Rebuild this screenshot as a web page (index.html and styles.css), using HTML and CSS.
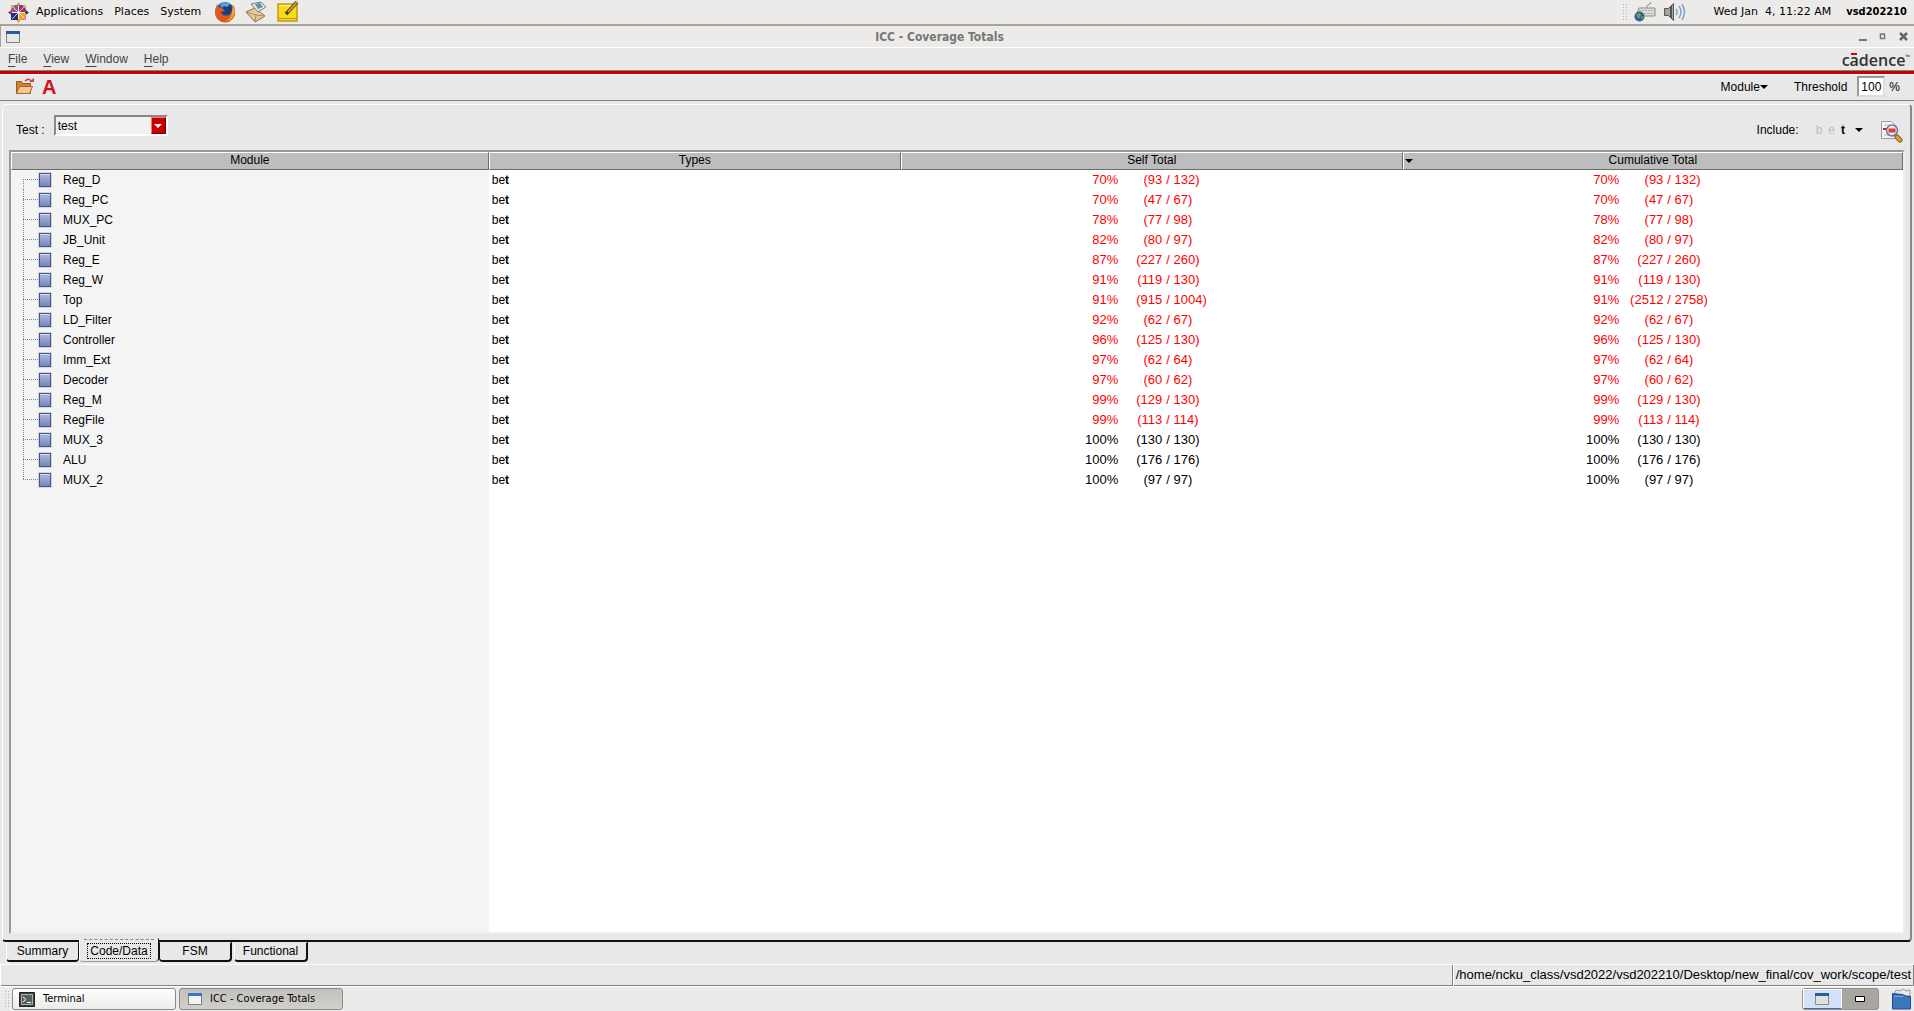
FILE: index.html
```html
<!DOCTYPE html>
<html lang="en">
<head>
<meta charset="utf-8">
<title>ICC - Coverage Totals</title>
<link rel="stylesheet" href="styles.css">
</head>
<body>
<header class="panel">
  <svg class="distro" viewBox="0 0 21 21" aria-hidden="true">
    <path fill="#9ac63c" d="M10.500 0l3 4h-6z"/><path fill="#e2a52c" d="M10.500 21l3-4h-6z"/>
    <path fill="#a0307e" d="M0 10.500l4-3v6z"/><path fill="#252f77" d="M21 10.500l-4-3v6z"/>
    <path fill="#a4518f" d="M3 3h7v7H3z"/><path fill="#a0307e" d="M11 3h7v7h-7z"/><path fill="#252f77" d="M3 11h7v7H3z"/><path fill="#efa724" d="M11 11h7v7h-7z"/>
    <path fill="#9ac63c" d="M3 3h4L3 7zM18 3v4l-4-4z"/><path fill="#e26aa5" d="M18 18v-4l-4 4z"/>
    <path stroke="#fff" stroke-width=".7" d="M4 4l13 13M17 4L4 17"/>
  </svg>
  <nav class="panel-menu"><a href="#">Applications</a><a href="#">Places</a><a href="#">System</a></nav>
  <div class="launchers">
    <a href="#" aria-label="Firefox"><svg width="22" height="22" viewBox="0 0 22 22"><circle cx="11" cy="11" r="10" fill="#2c64ac"/><circle cx="12" cy="8" r="6" fill="#1c3f7c"/><path fill="#4fa7dc" d="M6 3q6-3 10 0l-3 3-3-1-2 2z"/><path fill="#e2571b" d="M3 3L1 10q0 11 10 11.500Q21 21 21 10q0-4-2-6 0 4-1 6-1 5-6 5-5-1-5-4l4-1-3-3-4-1z"/><path fill="#f7a823" d="M19 4q3 5 1 10-3 6-8 6 6-3 6-10z"/></svg></a>
    <a href="#" aria-label="Mail"><svg width="24" height="22" viewBox="0 0 24 22"><path fill="#e9c793" stroke="#8b7149" d="M2 11l9-4 10 8-10 6z"/><path fill="#dfe6dd" stroke="#777f78" d="M7 3l10-2 5 5-8 5z"/><path fill="#5d91ad" d="M11 3l5-1 3 4-5 2z"/><path fill="none" stroke="#a98c5c" d="M2 11l10 3 9 1M11 21l1-7"/></svg></a>
    <a href="#" aria-label="Notes"><svg width="24" height="22" viewBox="0 0 24 22"><path fill="#f4dc1e" stroke="#c49a08" stroke-width="1.500" d="M2 3h19v17H2z"/><path stroke="#c49a08" d="M2 17.500h19"/><path stroke="#fff29a" d="M3.500 4.500h16"/><path stroke="#4a3a14" stroke-width="3.500" d="M10 13L21 1"/><path stroke="#c99545" stroke-width="2" d="M12 11L21 1"/></svg></a>
  </div>
  <div class="tray">
    <span class="grip"></span>
    <svg width="22" height="20" viewBox="0 0 22 20"><path fill="none" stroke="#888" d="M14 6Q11 4 14 3t3-3"/><path fill="#deded9" stroke="#8a8b86" d="M5 6h16v8H2z"/><path stroke="#aaa" stroke-dasharray="2 1" d="M5 8.500h15M4 11.500h16"/><circle cx="5.500" cy="14.500" r="5" fill="#2c5ba5"/><path fill="#6ca53a" d="M2 12l4-1 1 3-3 3zM7 15l3-1-2 4z"/></svg>
    <svg width="23" height="20" viewBox="0 0 23 20"><path fill="#a4a5a1" stroke="#555753" d="M1.500 6.500h4l5-5v17l-5-5h-4z"/><path fill="#555" d="M7 4h2v12H7z"/><path fill="none" stroke="#83a6cf" stroke-width="1.500" d="M13 7q2 3 0 6M16 4q4 6 0 12M19 2q5 8 0 16"/></svg>
    <span class="clock">Wed Jan&nbsp; 4, 11:22 AM</span>
    <strong>vsd202210</strong>
  </div>
</header>

<main class="window">
  <div class="titlebar">
    <svg width="14" height="12" viewBox="0 0 14 12"><path fill="#e6e9e5" stroke="#7d8285" d="M.5.5h13v11H.5z"/><path fill="#2b5b9f" d="M0 0h14v3H0z"/></svg>
    <h1>ICC - Coverage Totals</h1>
    <div class="controls">
      <button aria-label="Minimize"><svg width="8" height="10"><path fill="#777" d="M0 7h8v2H0z"/></svg></button>
      <button aria-label="Maximize"><svg width="8" height="10"><path fill="none" stroke="#777" stroke-width="1.500" d="M1.500 2h4v4.500h-4z"/></svg></button>
      <button aria-label="Close"><svg width="9" height="10"><path stroke="#666" stroke-width="2.500" d="M1 1l7 7M8 1L1 8"/></svg></button>
    </div>
  </div>

  <div class="menubar">
    <nav><a href="#"><u>F</u>ile</a><a href="#"><u>V</u>iew</a><a href="#"><u>W</u>indow</a><a href="#"><u>H</u>elp</a></nav>
    <div class="brand">c<span class="macron">a</span>dence<sup>™</sup></div>
  </div>

  <div class="toolbar">
    <button class="tool" aria-label="Open"><svg width="20" height="18" viewBox="0 0 20 18"><path fill="#cf823b" stroke="#9d5821" d="M1.500 15.500v-12h5l1 2h8v10z"/><path fill="#fac98a" stroke="#a9652c" d="M1.500 15.500l3-7h13l-3 7z"/><path fill="none" stroke="#c8474b" stroke-width="1.500" d="M10 3q4-4 7 1"/><path fill="#c8474b" d="M14 4h5V0z"/></svg></button>
    <button class="tool letter">A</button>
    <div class="tool-right">
      <button class="drop">Module<i class="caret"></i></button>
      <label for="threshold">Threshold</label>
      <input id="threshold" type="text" value="100">
      <span>%</span>
    </div>
  </div>

  <section class="sheet">
    <div class="filters">
      <label for="test">Test :</label>
      <div class="combo"><select id="test"><option>test</option></select><span class="combo-arrow"><i class="caret"></i></span></div>
      <div class="include"><span>Include:</span><button class="types"><span class="off">b</span><span class="off">e</span><b>t</b><i class="caret"></i></button>
        <button class="tool" aria-label="Inspect"><svg width="23" height="23" viewBox="0 0 23 23"><path fill="#f6f6f6" stroke="#9a9a9a" d="M1.500 1.500h10l4 4v13h-14z"/><path stroke="#bbb" d="M4 5h6M4 15h8"/><path stroke="#c22" stroke-width="2" d="M3 9h4"/><path stroke="#8a5a18" stroke-width="5" stroke-linecap="round" d="M17 17l3 3"/><path stroke="#eaa030" stroke-width="3" stroke-linecap="round" d="M17 17l3 3"/><circle cx="12" cy="10.500" r="5.500" fill="#f4dede" stroke="#6079ac" stroke-width="1.500"/><path fill="#d84444" d="M8.500 8.500h7v4h-7z"/></svg></button>
      </div>
    </div>
    <div class="grid">
      <table>
        <colgroup><col class="c-mod"><col class="c-typ"><col class="c-self"><col class="c-cum"></colgroup>
        <thead><tr><th>Module</th><th>Types</th><th>Self Total</th><th><i class="caret sort"></i>Cumulative Total</th></tr></thead>
        <tbody>
          <tr class="low"><td><div class="node">Reg_D</div></td><td>be<b>t</b></td><td><div class="score"><span>70%</span><span>(93</span><span>/ 132)</span></div></td><td><div class="score"><span>70%</span><span>(93</span><span>/ 132)</span></div></td></tr>
          <tr class="low"><td><div class="node">Reg_PC</div></td><td>be<b>t</b></td><td><div class="score"><span>70%</span><span>(47</span><span>/ 67)</span></div></td><td><div class="score"><span>70%</span><span>(47</span><span>/ 67)</span></div></td></tr>
          <tr class="low"><td><div class="node">MUX_PC</div></td><td>be<b>t</b></td><td><div class="score"><span>78%</span><span>(77</span><span>/ 98)</span></div></td><td><div class="score"><span>78%</span><span>(77</span><span>/ 98)</span></div></td></tr>
          <tr class="low"><td><div class="node">JB_Unit</div></td><td>be<b>t</b></td><td><div class="score"><span>82%</span><span>(80</span><span>/ 97)</span></div></td><td><div class="score"><span>82%</span><span>(80</span><span>/ 97)</span></div></td></tr>
          <tr class="low"><td><div class="node">Reg_E</div></td><td>be<b>t</b></td><td><div class="score"><span>87%</span><span>(227</span><span>/ 260)</span></div></td><td><div class="score"><span>87%</span><span>(227</span><span>/ 260)</span></div></td></tr>
          <tr class="low"><td><div class="node">Reg_W</div></td><td>be<b>t</b></td><td><div class="score"><span>91%</span><span>(119</span><span>/ 130)</span></div></td><td><div class="score"><span>91%</span><span>(119</span><span>/ 130)</span></div></td></tr>
          <tr class="low"><td><div class="node">Top</div></td><td>be<b>t</b></td><td><div class="score"><span>91%</span><span>(915</span><span>/ 1004)</span></div></td><td><div class="score"><span>91%</span><span>(2512</span><span>/ 2758)</span></div></td></tr>
          <tr class="low"><td><div class="node">LD_Filter</div></td><td>be<b>t</b></td><td><div class="score"><span>92%</span><span>(62</span><span>/ 67)</span></div></td><td><div class="score"><span>92%</span><span>(62</span><span>/ 67)</span></div></td></tr>
          <tr class="low"><td><div class="node">Controller</div></td><td>be<b>t</b></td><td><div class="score"><span>96%</span><span>(125</span><span>/ 130)</span></div></td><td><div class="score"><span>96%</span><span>(125</span><span>/ 130)</span></div></td></tr>
          <tr class="low"><td><div class="node">Imm_Ext</div></td><td>be<b>t</b></td><td><div class="score"><span>97%</span><span>(62</span><span>/ 64)</span></div></td><td><div class="score"><span>97%</span><span>(62</span><span>/ 64)</span></div></td></tr>
          <tr class="low"><td><div class="node">Decoder</div></td><td>be<b>t</b></td><td><div class="score"><span>97%</span><span>(60</span><span>/ 62)</span></div></td><td><div class="score"><span>97%</span><span>(60</span><span>/ 62)</span></div></td></tr>
          <tr class="low"><td><div class="node">Reg_M</div></td><td>be<b>t</b></td><td><div class="score"><span>99%</span><span>(129</span><span>/ 130)</span></div></td><td><div class="score"><span>99%</span><span>(129</span><span>/ 130)</span></div></td></tr>
          <tr class="low"><td><div class="node">RegFile</div></td><td>be<b>t</b></td><td><div class="score"><span>99%</span><span>(113</span><span>/ 114)</span></div></td><td><div class="score"><span>99%</span><span>(113</span><span>/ 114)</span></div></td></tr>
          <tr><td><div class="node">MUX_3</div></td><td>be<b>t</b></td><td><div class="score"><span>100%</span><span>(130</span><span>/ 130)</span></div></td><td><div class="score"><span>100%</span><span>(130</span><span>/ 130)</span></div></td></tr>
          <tr><td><div class="node">ALU</div></td><td>be<b>t</b></td><td><div class="score"><span>100%</span><span>(176</span><span>/ 176)</span></div></td><td><div class="score"><span>100%</span><span>(176</span><span>/ 176)</span></div></td></tr>
          <tr><td><div class="node">MUX_2</div></td><td>be<b>t</b></td><td><div class="score"><span>100%</span><span>(97</span><span>/ 97)</span></div></td><td><div class="score"><span>100%</span><span>(97</span><span>/ 97)</span></div></td></tr>
        </tbody>
      </table>
    </div>
  </section>

  <div class="tabs">
    <button>Summary</button><button class="current"><span>Code/Data</span></button><button class="outlined">FSM</button><button class="last">Functional</button>
  </div>
  <div class="status"><span></span><span>/home/ncku_class/vsd2022/vsd202210/Desktop/new_final/cov_work/scope/test</span></div>
</main>

<footer class="taskbar">
  <span class="grip"></span>
  <button><svg width="16" height="15" viewBox="0 0 16 15"><path fill="#394345" stroke="#222" d="M.5.5h15v14H.5z"/><path fill="#55605f" stroke="#aab0ae" d="M2.500 2.500h11v10h-11z"/><path fill="none" stroke="#fff" d="M4 5l3 2.500L4 10M8 10.500h4"/></svg>Terminal</button>
  <button class="active"><svg width="14" height="12" viewBox="0 0 14 12"><path fill="#f4f5f3" stroke="#7d8285" d="M.5.5h13v11H.5z"/><path fill="#3f74c0" d="M0 0h14v3H0z"/></svg>ICC - Coverage Totals</button>
  <div class="pager">
    <button class="here" aria-label="Workspace 1"><svg width="14" height="12" viewBox="0 0 14 12"><path fill="#dfe3de" stroke="#8a8a86" d="M.5.5h13v11H.5z"/><path fill="#2b5b9f" d="M0 0h14v3H0z"/></svg></button>
    <button aria-label="Workspace 2"><svg width="10" height="6"><path fill="#fff" stroke="#000" d="M.5.5h9v5h-9z"/></svg></button>
  </div>
  <button class="trash" aria-label="Trash"><svg width="21" height="22" viewBox="0 0 21 22"><path fill="#e8eaea" stroke="#999" d="M3 6l2-4 4 1 3-2 3 2 4-1v6z"/><path fill="#3a76bd" stroke="#204a87" d="M1.500 5.500l10 1 4 2h4v12.500h-18z"/><path stroke="#7da9dc" d="M3 8.500h9"/></svg></button>
</footer>
</body>
</html>
```
FILE: styles.css
```css
* { box-sizing: border-box; }
body {
  margin: 0;
  min-height: 100vh;
  display: flex;
  flex-direction: column;
  background: #edebe9;
  color: #000;
  font: 12px/16px "Liberation Sans", Arial, sans-serif;
}
a { color: inherit; text-decoration: none; }
button { margin: 0; padding: 0; border: 0; background: none; color: inherit; font: inherit; }
svg { display: block; }

.panel {
  display: flex;
  align-items: center;
  height: 26px;
  padding: 0 7px 0 8px;
  border-bottom: 2px solid #a5a29f;
  font-family: "DejaVu Sans", sans-serif;
  font-size: 11px;
}
.distro { width: 21px; height: 21px; }
.panel-menu { display: flex; gap: 11px; margin-left: 7px; }
.launchers { display: flex; gap: 8px; margin-left: 13px; }
.tray { display: flex; align-items: center; gap: 7px; margin-left: auto; }
.tray strong { font-family: "DejaVu Sans Condensed", "DejaVu Sans", sans-serif; }
.clock { margin: 0 8px 0 21px; }
.grip {
  width: 5px;
  height: 18px;
  background: radial-gradient(circle, #b5b3b0 1px, transparent 1px) 0 0 / 3px 3px;
}

.window { flex: 1; display: flex; flex-direction: column; background: #e8e8e8; }
.titlebar {
  display: flex;
  align-items: center;
  height: 21px;
  padding: 0 6px 0 5px;
  border-left: 1px solid #a5a29f;
  background: #edebe9;
  color: #777673;
}
.titlebar h1 {
  flex: 1;
  margin: 0;
  text-align: center;
  font: bold 12px/16px "DejaVu Sans Condensed", "DejaVu Sans", sans-serif;
}
.controls { display: flex; gap: 12px; }

.menubar {
  display: flex;
  justify-content: space-between;
  height: 27px;
  padding: 3px 4px 0 8px;
  border-top: 1px solid #fff;
  border-bottom: 3px solid #c80000;
  box-shadow: inset 0 -1px #808080;
  color: #444;
}
.menubar nav { display: flex; gap: 16px; }
.menubar u { text-underline-offset: 3px; }
.brand { display: flex; color: #333; font: 600 16px/18px "Open Sans", sans-serif; }
.brand sup { font-size: 6px; line-height: 12px; }
.macron { background: linear-gradient(#d00, #d00) 50% 2px / 6px 2px no-repeat; }

.toolbar {
  display: flex;
  align-items: center;
  gap: 7px;
  height: 27px;
  padding: 0 14px 2px 15px;
  border-top: 1px solid #fff;
  border-bottom: 1px solid #808080;
}
.letter { color: #d0121b; font: bold 20px/20px "Liberation Sans", sans-serif; }
.tool-right { display: flex; align-items: center; margin-left: auto; }
.tool-right label { margin: 0 10px 0 26px; }
.tool-right input {
  width: 28px;
  height: 21px;
  margin-right: 4px;
  padding: 0 0 0 2px;
  border: 2px solid;
  border-color: #999 #ddd #ddd #999;
  background: #fff;
  font: inherit;
}
.caret {
  display: inline-block;
  border: 4px solid transparent;
  border-top-color: #000;
  border-bottom: 0;
  vertical-align: middle;
}

.sheet {
  flex: 1;
  display: flex;
  flex-direction: column;
  margin: 3px 2px 0;
  padding: 10px 5px 6px 6px;
  border: 1px solid #fff;
  border-right: 2px solid #888;
  border-bottom: 2px solid #111;
  border-radius: 4px;
}
.filters { display: flex; align-items: flex-start; height: 35px; padding: 0 2px 0 7px; }
.filters > label { margin-right: 9px; padding-top: 7px; }
.combo {
  display: grid;
  grid-template-columns: 1fr 15px;
  width: 114px;
  height: 21px;
  border: 2px solid;
  border-color: #888 #fff #fff #888;
  background: #f1f1f1;
}
.combo select {
  grid-area: 1 / 1 / 2 / 3;
  appearance: none;
  border: 0;
  padding: 0 2px;
  background: none;
  color: #000;
  font: inherit;
}
.combo-arrow {
  grid-area: 1 / 2;
  display: flex;
  align-items: center;
  justify-content: center;
  border: 1px solid;
  border-color: #ff7272 #780000 #780000 #ff7272;
  background: #c80000;
  pointer-events: none;
}
.combo-arrow .caret { border-top-color: #fff; }
.include { display: flex; gap: 17px; margin-left: auto; padding-top: 7px; }
.types { display: flex; align-items: center; gap: 6px; height: 16px; }
.types .caret { margin-left: 4px; }
.off { color: #bdbdbd; }
.include .tool { margin-top: -2px; height: 23px; }

.grid {
  flex: 1;
  border: 2px solid;
  border-color: #999 #eee #eee #999;
  background: linear-gradient(90deg, #f4f4f4 25.250%, #fff 25.250%);
}
table { width: 100%; table-layout: fixed; border-collapse: separate; border-spacing: 0; }
.c-mod { width: 25.250%; }
.c-typ { width: 21.780%; }
.c-self { width: 26.530%; }
th {
  position: relative;
  height: 18px;
  padding: 0 0 2px;
  border: 1px solid;
  border-color: #fff #6c6c6c #6c6c6c #fff;
  background: #bdbdbd;
  font-weight: normal;
  line-height: 14px;
}
.sort { position: absolute; left: 1px; top: 6px; }
td { height: 20px; padding: 0 3px; line-height: 20px; }
td:first-child { padding: 0 0 0 12px; }
.low .score { color: #f00; }

.node {
  display: flex;
  align-items: center;
  height: 20px;
  background:
    repeating-linear-gradient(90deg, #888 0 1px, transparent 1px 2px) 0 9px / 15px 1px no-repeat,
    repeating-linear-gradient(#888 0 1px, transparent 1px 2px) 0 0 / 1px 20px no-repeat;
}
tr:first-child .node { background-position: 0 9px, 0 9px; }
tr:last-child .node { background-size: 15px 1px, 1px 10px; }
.node::before {
  content: "";
  width: 10px;
  height: 12px;
  margin: 0 12px 0 16px;
  border: 1px solid #41588f;
  outline: 1px solid #d4d4d4;
  box-shadow: inset 0 1px #d5dcf0;
  background: linear-gradient(#b0b9dc, #7486bb);
}

.score {
  display: grid;
  grid-template-columns: 60px 44px 83px;
  justify-content: center;
  font-size: 13px;
}
.score span { text-align: right; }
.score span:last-child { padding-left: 4px; text-align: left; }

.tabs { display: flex; padding-left: 6px; height: 22px; }
.tabs button {
  width: 73px;
  height: 20px;
  padding-bottom: 2px;
  border: 1px solid;
  border-color: transparent #111 #111 #fff;
  border-bottom-width: 2px;
  border-radius: 0 0 4px 4px;
  line-height: 14px;
}
.tabs .current {
  position: relative;
  width: 80px;
  height: 24px;
  margin-top: -4px;
  padding: 1px 0 0;
  border: 1px solid;
  border-color: transparent #111 #999 #fff;
  background: #e8e8e8;
}
.current::before {
  content: "";
  position: absolute;
  left: 4px;
  right: 4px;
  top: 0;
  border-top: 1px dashed #888;
}
.current span { display: inline-block; padding: 0 2px; border: 1px dotted #000; }
.tabs .outlined { border-left-color: #111; border-right-width: 2px; }
.tabs .last { width: 74px; margin-left: 2px; border-right-width: 2px; }

.status {
  display: flex;
  height: 23px;
  border-top: 1px solid #fff;
  border-bottom: 1px solid #fff;
  box-shadow: inset 0 -1px #808080;
  font-size: 13px;
}
.status span { padding: 2px 2px; border-left: 1px solid #fff; border-right: 1px solid #808080; }
.status span:first-child { flex: 1; }

.taskbar {
  display: flex;
  align-items: center;
  gap: 3px;
  height: 24px;
  padding: 0 2px 0 4px;
  font-family: "DejaVu Sans Condensed", "DejaVu Sans", sans-serif;
  font-size: 11px;
}
.taskbar > button {
  display: flex;
  align-items: center;
  gap: 8px;
  width: 164px;
  height: 22px;
  padding: 0 6px;
  border: 1px solid #8d8b88;
  border-radius: 3px;
  background: linear-gradient(#fff, #ecebe9);
}
.taskbar > .active { padding: 0 8px; background: linear-gradient(#c3c1be, #d1cfcc); }
.pager {
  display: flex;
  width: 77px;
  height: 22px;
  margin: 0 9px 0 auto;
  border: 1px solid #96938f;
  border-radius: 3px;
  background: #a9a6a2;
}
.pager button { flex: 1; display: flex; align-items: center; justify-content: center; }
.pager .here { background: #d0e1f8; border: 1px solid #fff; border-bottom-color: #3a6fb5; }
.taskbar > .trash { width: 21px; padding: 0; border: 0; background: none; }
```
